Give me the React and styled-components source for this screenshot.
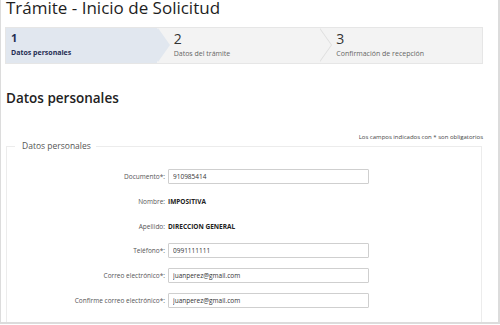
import React from 'react';
import styled, { createGlobalStyle } from 'styled-components';

const GlobalStyle = createGlobalStyle`
    html, body {
        margin: 0;
        padding: 0;
        background: #ffffff;
    }
    body {
        font-family: "Open Sans", "Liberation Sans", sans-serif;
        color: #333;
    }
`

const steps = [
    { num: '1', label: 'Datos personales' },
    { num: '2', label: 'Datos del trámite' },
    { num: '3', label: 'Confirmación de recepción' },
];

const fields = [
    { label: 'Documento*:', value: '910985414', input: true },
    { label: 'Nombre:', value: 'IMPOSITIVA' },
    { label: 'Apellido:', value: 'DIRECCION GENERAL' },
    { label: 'Teléfono*:', value: '0991111111', input: true },
    { label: 'Correo electrónico*:', value: 'juanperez@gmail.com', input: true },
    { label: 'Confirme correo electrónico*:', value: 'juanperez@gmail.com', input: true },
];

function App() {
    return (
        <>
            <GlobalStyle />
            <Frame>
                <Title>Trámite - Inicio de Solicitud</Title>

                <StepBar>
                    {steps.map((s, i) => (
                        <Step key={s.num} $active={i === 0} $first={i === 0} $last={i === steps.length - 1}>
                            <StepNum $active={i === 0}>{s.num}</StepNum>
                            <StepLabel $active={i === 0}>{s.label}</StepLabel>
                        </Step>
                    ))}
                </StepBar>

                <Heading>Datos personales</Heading>

                <Note>Los campos indicados con * son obligatorios</Note>

                <Fieldset>
                    <Legend>Datos personales</Legend>
                    <Rows>
                        {fields.map((f) => (
                            <Row key={f.label}>
                                <Label>{f.label}</Label>
                                {f.input
                                    ? <Input type='text' defaultValue={f.value} />
                                    : <Value>{f.value}</Value>}
                            </Row>
                        ))}
                    </Rows>
                </Fieldset>
            </Frame>
        </>
    )
}

const Frame = styled.div`
    box-sizing: border-box;
    width: 500px;
    height: 324px;
    overflow: hidden;
    border-left: 1px solid #dcdcdc;
    border-right: 2px solid #dcdcdc;
    border-bottom: 2px solid #dcdcdc;
    padding: 0 15px 0 4px;
`

const Title = styled.h1`
    margin: -3px 0 0 1px;
    font-size: 17px;
    line-height: 22px;
    font-weight: 400;
    color: #1e1e1e;
`

const StepBar = styled.div`
    display: flex;
    height: 37px;
    margin-top: 8px;
    background: #f3f3f3;
    border: 1px solid #e6e6e6;
    box-sizing: border-box;
`

const Step = styled.div`
    position: relative;
    flex: 1;
    display: flex;
    flex-direction: column;
    justify-content: center;
    padding-left: ${p => p.$first ? '5px' : '17px'};
    background: ${p => p.$active ? '#e1e7ef' : 'transparent'};

    &::before,
    &::after {
        content: '';
        display: ${p => p.$last ? 'none' : 'block'};
        position: absolute;
        top: 0;
        width: 0;
        height: 0;
        border-top: 17.5px solid transparent;
        border-bottom: 17.5px solid transparent;
        z-index: 1;
    }
    &::after {
        right: -12px;
        border-left: 12px solid ${p => p.$active ? '#e1e7ef' : '#f3f3f3'};
    }
    &::before {
        right: -13px;
        border-left: 12px solid ${p => p.$active ? '#e1e7ef' : '#dedede'};
    }
`

const StepNum = styled.div`
    font-size: ${p => p.$active ? '11px' : '14px'};
    font-weight: ${p => p.$active ? 700 : 400};
    line-height: ${p => p.$active ? '13px' : '16px'};
    color: ${p => p.$active ? '#1f2d52' : '#333'};
    margin-top: ${p => p.$active ? '-3px' : '-1px'};
`

const StepLabel = styled.div`
    font-size: 7px;
    font-weight: ${p => p.$active ? 700 : 400};
    color: ${p => p.$active ? '#1f2d52' : '#666'};
    margin-top: ${p => p.$active ? '4px' : '2px'};
    line-height: 10px;
`

const Heading = styled.h2`
    margin: 25px 0 0 1px;
    font-size: 13.5px;
    line-height: 18px;
    font-weight: 600;
    color: #222;
`

const Note = styled.div`
    margin-top: 26px;
    text-align: right;
    font-size: 6px;
    line-height: 8px;
    color: #444;
`

const Fieldset = styled.fieldset`
    margin: -1px 1px 0 1px;
    padding: 0 0 20px 0;
    border: 1px solid #ececec;
    min-width: 0;
`

const Legend = styled.legend`
    margin-left: 8px;
    padding: 0 5px 0 7px;
    font-size: 8.5px;
    line-height: 12px;
    color: #555;
`

const Rows = styled.div`
    display: flex;
    flex-direction: column;
    gap: 9.8px;
    padding-top: 17px;
`

const Row = styled.div`
    display: flex;
    align-items: center;
    gap: 3px;
    height: 15px;
`

const Label = styled.span`
    width: 158px;
    text-align: right;
    font-size: 6.5px;
    color: #555;
`

const Value = styled.span`
    font-size: 6.5px;
    font-weight: 700;
    color: #222;
`

const Input = styled.input`
    box-sizing: border-box;
    width: 201px;
    height: 15px;
    padding: 0 4px;
    border: 1px solid #cfcfcf;
    border-radius: 1px;
    font-family: "Open Sans", "Liberation Sans", sans-serif;
    font-size: 6.5px;
    color: #333;
    outline: none;
`

export default App;
